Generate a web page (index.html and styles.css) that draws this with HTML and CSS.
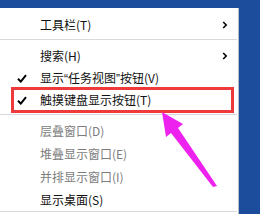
FILE: index.html
```html
<!DOCTYPE html>
<html lang="zh-CN">
<head>
<meta charset="utf-8">
<link rel="stylesheet" href="styles.css">
</head>
<body>
<div class="menu">
  <div class="item"><span class="gut"></span><span class="label">工具栏(T)</span><span class="sub"><svg width="6" height="8" viewBox="0 0 6 8"><path d="M1.2 1 L4.2 4 L1.2 7" fill="none" stroke="#000" stroke-width="1.6"/></svg></span></div>
  <div class="sep"></div>
  <div class="item"><span class="gut"></span><span class="label">搜索(H)</span><span class="sub"><svg width="6" height="8" viewBox="0 0 6 8"><path d="M1.2 1 L4.2 4 L1.2 7" fill="none" stroke="#000" stroke-width="1.6"/></svg></span></div>
  <div class="item short"><span class="gut"><svg class="check" width="10" height="9" viewBox="0 0 10 9"><path d="M1 4.8 L3.8 7.6 L9 1.2" fill="none" stroke="#000" stroke-width="2"/></svg></span><span class="label">显示<span class="q">“</span>任务视图<span class="q">”</span>按钮(V)</span><span class="sub"></span></div>
  <div class="item short"><span class="gut"><svg class="check" width="10" height="9" viewBox="0 0 10 9"><path d="M1 4.8 L3.8 7.6 L9 1.2" fill="none" stroke="#000" stroke-width="2"/></svg></span><span class="label">触摸键盘显示按钮(T)</span><span class="sub"></span></div>
  <div class="sep"></div>
  <div class="item disabled"><span class="gut"></span><span class="label">层叠窗口(D)</span><span class="sub"></span></div>
  <div class="item disabled"><span class="gut"></span><span class="label">堆叠显示窗口(E)</span><span class="sub"></span></div>
  <div class="item disabled"><span class="gut"></span><span class="label">并排显示窗口(I)</span><span class="sub"></span></div>
  <div class="item"><span class="gut"></span><span class="label">显示桌面(S)</span><span class="sub"></span></div>
  <div class="sep last"></div>
</div>
<div class="highlight"></div>
<svg class="arrow" width="260" height="214" viewBox="0 0 260 214"><polygon points="162,112 183,124 178,128 217,186 213,187 171,133 166,137" fill="#ee22ee"/></svg>
</body>
</html>
```

FILE: styles.css
```css
html, body {
  margin: 0;
  padding: 0;
}
body {
  width: 260px;
  height: 214px;
  overflow: hidden;
  background: #1c4c9c;
  position: relative;
  font-family: "Noto Sans CJK SC", "Noto Sans", sans-serif;
  font-size: 12px;
}
.menu {
  margin-top: 8px;
  width: 239px;
  height: 206px;
  background: #fff;
  border-right: 1px solid #b8bcc4;
  padding-top: 5px;
  box-sizing: border-box;
  display: flex;
  flex-direction: column;
}
.item {
  height: 23px;
  display: grid;
  grid-template-columns: 40px 1fr 16px;
  align-items: center;
  color: #111;
  line-height: 16px;
  flex: none;
}
.item.short {
  height: 22px;
}
.item.disabled {
  color: #7d7d7d;
}
.q {
  font-family: "Liberation Sans", sans-serif;
}
.gut {
  display: flex;
  justify-content: flex-start;
  padding-left: 17px;
  align-items: center;
}
.sub {
  display: flex;
  align-items: center;
}
.sep {
  flex: none;
  height: 1px;
  margin: 3px 2px 3px 0;
  background: #dadada;
  width: 237px;
}
.sep + .item {
  margin-top: 1px;
}
.sep.last {
  margin-top: 0;
}
.highlight {
  position: absolute;
  left: 11px;
  top: 87px;
  width: 223px;
  height: 26px;
  border: 3px solid #ee3a3a;
  box-sizing: border-box;
}
.arrow {
  position: absolute;
  left: 0;
  top: 0;
}
```
